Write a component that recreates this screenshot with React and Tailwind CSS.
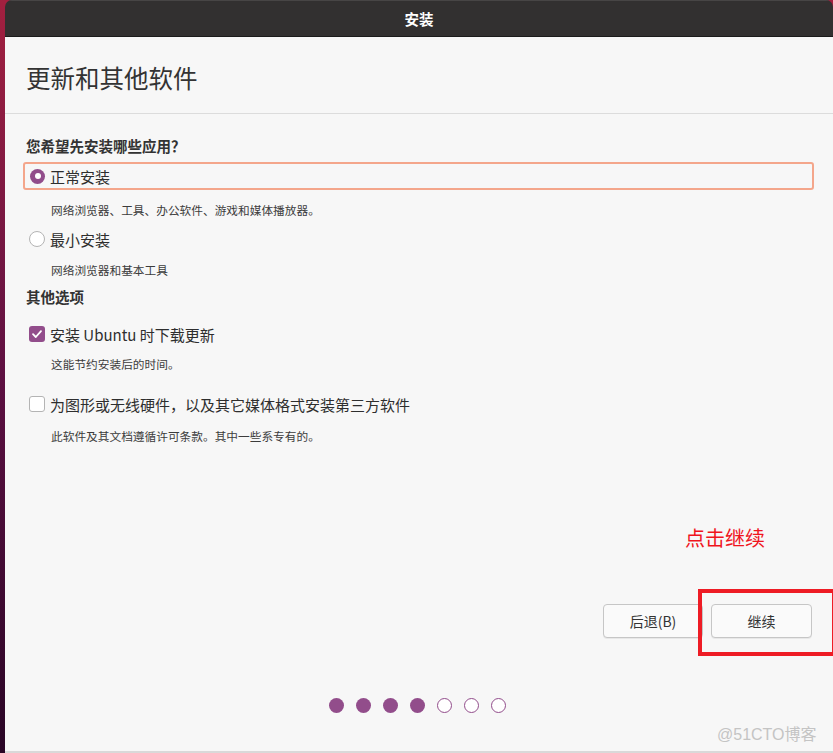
import React from "react";

const FONT = { fontFamily: '"Noto Sans CJK SC", "Noto Sans", sans-serif' };

const Radio = ({ checked }) =>
  checked ? (
    <span className="flex items-center justify-center w-[15px] h-[15px] rounded-full bg-[#924d8b]">
      <span className="w-[6px] h-[6px] rounded-full bg-white" />
    </span>
  ) : (
    <span className="w-[16px] h-[16px] rounded-full bg-white border border-[#b4b4b4]" />
  );

const Checkbox = ({ checked }) =>
  checked ? (
    <span className="flex items-center justify-center w-[16px] h-[16px] rounded-[3px] bg-[#924d8b]">
      <svg width="12" height="12" viewBox="0 0 12 12" fill="none">
        <path
          d="M2 6.2 L4.8 9 L10 3.2"
          stroke="white"
          strokeWidth="1.8"
          strokeLinecap="round"
          strokeLinejoin="round"
        />
      </svg>
    </span>
  ) : (
    <span className="w-[16px] h-[16px] rounded-[3px] bg-white border border-[#b4b4b4]" />
  );

const OptionRow = ({ control, label, focused, className }) => (
  <div
    className={`flex items-center h-[28px] gap-[5px] rounded-[3px] ${
      focused ? "border-2 border-[#f4a68b] -mx-[3px] pl-[5px]" : "pl-[3px]"
    } ${className}`}
  >
    {control}
    <span className="text-[15px] text-[#2e2e2e] leading-none">{label}</span>
  </div>
);

const Desc = ({ children, className }) => (
  <p className={`pl-[25px] text-[11.7px] leading-[18px] text-[#3c3c3c] ${className}`}>
    {children}
  </p>
);

export default function App() {
  const dots = [true, true, true, true, false, false, false];

  return (
    <div
      className="relative w-[833px] h-[753px] overflow-hidden bg-gradient-to-b from-[#a3203f] via-[#5e1042] to-[#2a0626] flex"
      style={FONT}
    >
      <div className="ml-[5px] flex-1 flex flex-col rounded-t-[7px] overflow-hidden">
        {/* Title bar */}
        <div className="h-[37px] bg-[#323030] border-t border-[#474545] border-b border-b-[#1b1b1b] flex items-center justify-center">
          <span className="text-white text-[14.5px] font-bold">安装</span>
        </div>

        {/* Body */}
        <div className="flex-1 bg-[#f7f7f7] flex flex-col border-b-2 border-[#d9d9d9]">
          <h1 className="pt-[26px] pl-[21px] h-[76px] text-[24.5px] leading-[30px] text-[#333] font-normal">
            更新和其他软件
          </h1>
          <div className="h-px bg-[#dcdcdc]" />

          <div className="pl-[21px] pr-[22px]">
            <h2 className="mt-[22px] text-[14.5px] leading-[20px] font-bold text-[#333]">
              您希望先安装哪些应用？
            </h2>
            <OptionRow
              className="mt-[6px]"
              focused
              control={<Radio checked />}
              label="正常安装"
            />
            <Desc className="mt-[11px]">网络浏览器、工具、办公软件、游戏和媒体播放器。</Desc>
            <OptionRow
              className="mt-[6px]"
              control={<Radio checked={false} />}
              label="最小安装"
            />
            <Desc className="mt-[8px]">网络浏览器和基本工具</Desc>

            <h2 className="mt-[8px] text-[14.5px] leading-[20px] font-bold text-[#333]">
              其他选项
            </h2>
            <OptionRow
              className="mt-[13px]"
              control={<Checkbox checked />}
              label="安装 Ubuntu 时下载更新"
            />
            <Desc className="mt-[7px]">这能节约安装后的时间。</Desc>
            <OptionRow
              className="mt-[17px]"
              control={<Checkbox checked={false} />}
              label="为图形或无线硬件，以及其它媒体格式安装第三方软件"
            />
            <Desc className="mt-[9px]">此软件及其文档遵循许可条款。其中一些系专有的。</Desc>
          </div>

          <div className="flex-1" />

          {/* Buttons */}
          <div className="flex justify-end gap-[8px] pr-[21px]">
            <button className="w-[100px] h-[34px] rounded-[4px] border border-[#c6c6c6] bg-[#fafafa] shadow-[0_1px_0_rgba(0,0,0,0.06)] text-[14px] text-[#333]">
              后退(B)
            </button>
            <button className="w-[101px] h-[34px] rounded-[4px] border border-[#c6c6c6] bg-[#fafafa] shadow-[0_1px_0_rgba(0,0,0,0.06)] text-[14px] text-[#333]">
              继续
            </button>
          </div>

          {/* Progress dots */}
          <div className="mt-[60px] mb-[38px] flex justify-center gap-[12px] pr-[3px]">
            {dots.map((on, i) => (
              <span
                key={i}
                className={`w-[15px] h-[15px] rounded-full ${
                  on ? "bg-[#924d8b]" : "bg-white border border-[#924d8b]"
                }`}
              />
            ))}
          </div>
        </div>
      </div>

      {/* Annotation overlay */}
      <span className="absolute left-[685px] top-[524px] text-[20px] leading-[28px] text-[#f0141c]">
        点击继续
      </span>
      <div className="absolute left-[698px] top-[589px] w-[138px] h-[67px] border-[4px] border-[#ee1c25]" />

      {/* Watermark */}
      <span
        className="absolute left-[717px] top-[725px] text-[16px] leading-[20px] text-[#c4c4c4]"
        style={{ fontFamily: '"Liberation Sans", "Noto Sans CJK SC", sans-serif' }}
      >
        @51CTO博客
      </span>
    </div>
  );
}
